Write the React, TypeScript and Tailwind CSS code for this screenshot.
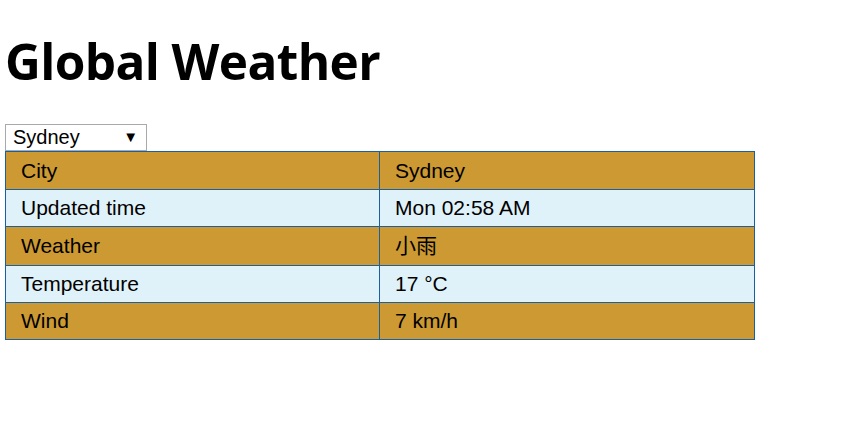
import React, { useState } from 'react';

const rows = [
    { label: 'City', value: 'Sydney', h: 'h-[38px]' },
    { label: 'Updated time', value: 'Mon 02:58 AM', h: 'h-[37px]' },
    { label: 'Weather', value: '小雨', h: 'h-[39px]' },
    { label: 'Temperature', value: '17 °C', h: 'h-[37px]' },
    { label: 'Wind', value: '7 km/h', h: 'h-[37px]' },
];

export default function App() {
    const [city, setCity] = useState('Sydney');

    return (
        <div className="min-h-screen bg-white px-[5px] text-black">
            {/* title */}
            <h1 className="pt-[26px] pb-[28px] text-[49.5px] font-bold leading-[70px] font-['Open_Sans','Noto_Sans',sans-serif] tracking-[-0.6px]">
                Global Weather
            </h1>

            {/* city picker */}
            <div className="relative w-[142px] h-[27px]">
                <select
                    value={city}
                    onChange={e => setCity(e.target.value)}
                    className="appearance-none w-full h-full border border-[#a9a9a9] bg-white pl-[7px] text-[20px] leading-[25px] font-['Liberation_Sans',Arial,sans-serif] outline-none"
                >
                    <option>Sydney</option>
                    <option>Tokyo</option>
                    <option>London</option>
                </select>
                <span className="pointer-events-none absolute right-[9px] top-[3px] text-[15px] leading-[18px]">▼</span>
            </div>

            {/* weather table */}
            <table className="w-[750px] border-collapse table-fixed text-[21px] font-['Liberation_Sans','Noto_Sans_CJK_SC',sans-serif]">
                <tbody>
                    {rows.map((row, i) => (
                        <tr key={row.label} className={i % 2 == 0 ? 'bg-[#cc9933]' : 'bg-[#e0f2f9]'}>
                            <td className={`w-[374px] ${row.h} border border-[#1a5fa0] pl-[15px] py-0`}>{row.label}</td>
                            <td className={`${row.h} border border-[#1a5fa0] pl-[15px] py-0`}>{row.value}</td>
                        </tr>
                    ))}
                </tbody>
            </table>
        </div>
    );
}
